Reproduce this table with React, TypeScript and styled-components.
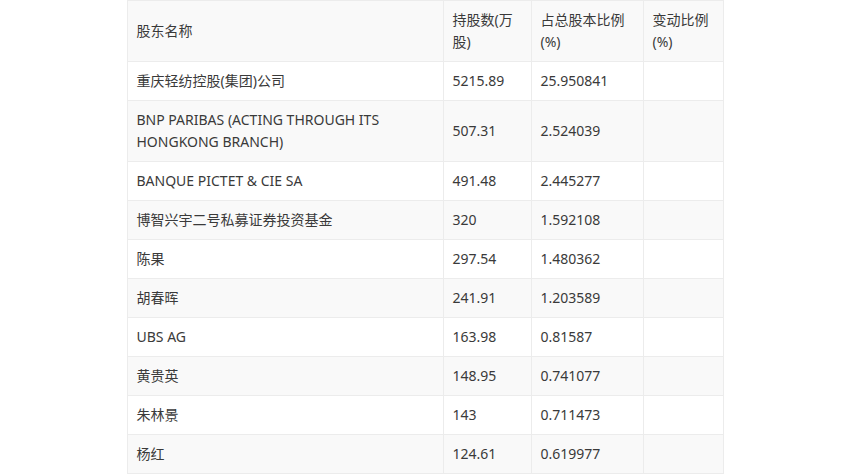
import styled, { createGlobalStyle } from 'styled-components'

const GlobalStyle = createGlobalStyle`
  body {
    margin: 0;
    background: #fff;
    font-family: "Noto Sans", "Noto Sans CJK SC", sans-serif;
  }
`

type Holder = {
  name: string
  shares: string
  ratio: string
  change?: string
}

const holders: Holder[] = [
  { name: '重庆轻纺控股(集团)公司', shares: '5215.89', ratio: '25.950841' },
  { name: 'BNP PARIBAS (ACTING THROUGH ITS HONGKONG BRANCH)', shares: '507.31', ratio: '2.524039' },
  { name: 'BANQUE PICTET & CIE SA', shares: '491.48', ratio: '2.445277' },
  { name: '博智兴宇二号私募证券投资基金', shares: '320', ratio: '1.592108' },
  { name: '陈果', shares: '297.54', ratio: '1.480362' },
  { name: '胡春晖', shares: '241.91', ratio: '1.203589' },
  { name: 'UBS AG', shares: '163.98', ratio: '0.81587' },
  { name: '黄贵英', shares: '148.95', ratio: '0.741077' },
  { name: '朱林景', shares: '143', ratio: '0.711473' },
  { name: '杨红', shares: '124.61', ratio: '0.619977' },
]

export default function App() {
  return (
    <>
      <GlobalStyle />
      <Page>
        <HolderTable>
          <colgroup>
            <col style={{ width: 316 }} />
            <col style={{ width: 88 }} />
            <col style={{ width: 112 }} />
            <col style={{ width: 80 }} />
          </colgroup>
          <tbody>
            <Row>
              <Cell>股东名称</Cell>
              <Cell>持股数(万股)</Cell>
              <Cell>占总股本比例(%)</Cell>
              <Cell>变动比例(%)</Cell>
            </Row>
            {holders.map((h) => (
              <Row key={h.name}>
                <Cell>{h.name}</Cell>
                <Cell>{h.shares}</Cell>
                <Cell>{h.ratio}</Cell>
                <Cell>{h.change ?? ''}</Cell>
              </Row>
            ))}
          </tbody>
        </HolderTable>
      </Page>
    </>
  )
}

const Page = styled.div`
  display: flex;
  justify-content: center;
`

const HolderTable = styled.table`
  width: 596px;
  border-collapse: collapse;
  table-layout: fixed;
  font-size: 14px;
  line-height: 22px;
  color: #3a3a3a;
`

const Row = styled.tr`
  &:nth-child(odd) {
    background: #f9f9f9;
  }
`

const Cell = styled.td`
  border: 1px solid #ececec;
  padding: 8px 9px;
  text-align: left;
  vertical-align: middle;
  word-break: break-word;
`
